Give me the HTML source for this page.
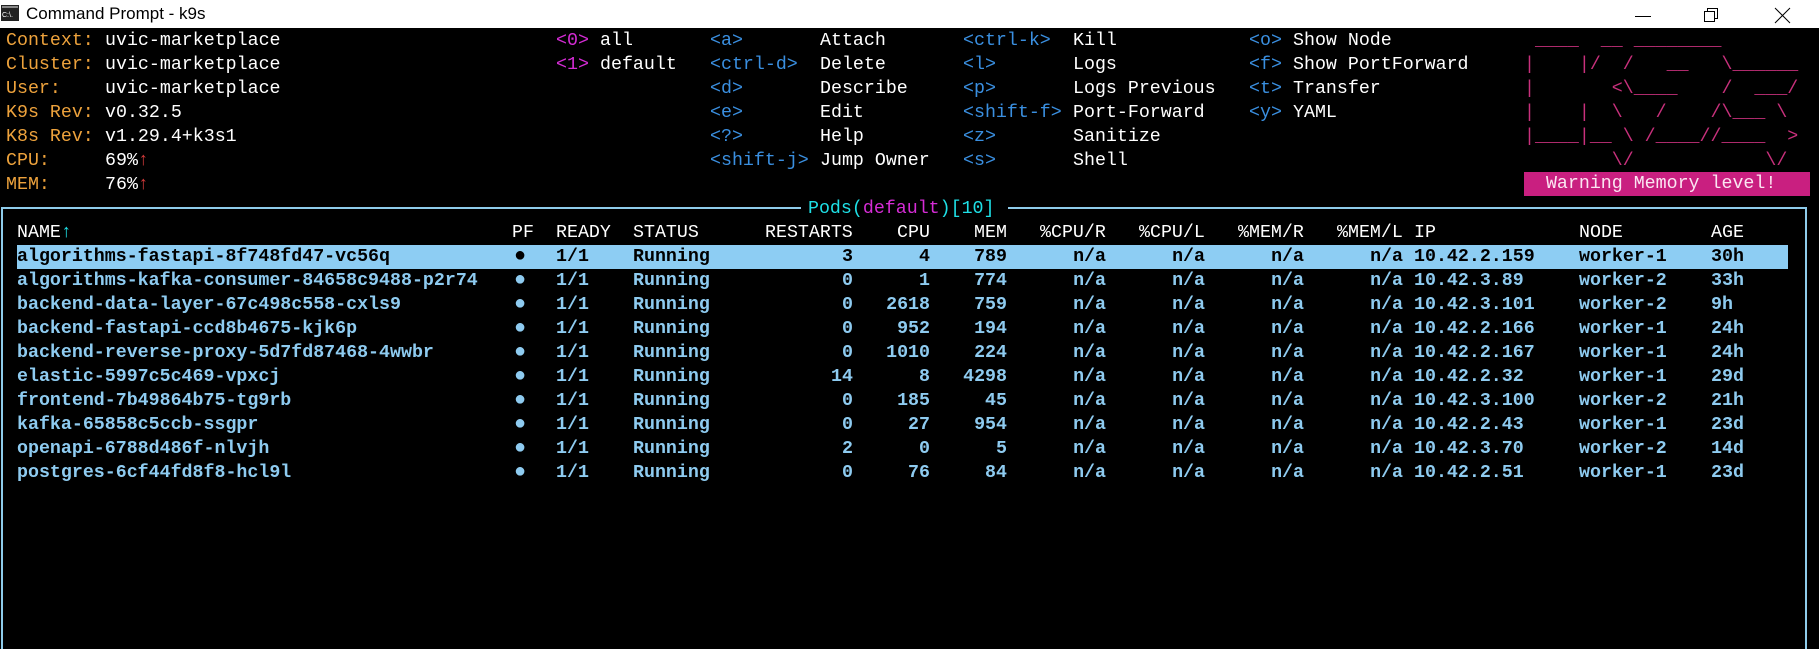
<!DOCTYPE html>
<html><head><meta charset="utf-8"><style>
*{margin:0;padding:0;box-sizing:border-box}
html,body{width:1819px;height:649px;overflow:hidden}
body{background:#000;position:relative;font-family:"Liberation Mono",monospace;font-size:18.3px;line-height:24px}
.tb{position:absolute;left:0;top:0;width:1819px;height:28px;background:#fff}
.tt{position:absolute;left:26px;top:3px;font-family:"Liberation Sans",sans-serif;font-size:17px;line-height:22px;color:#000}
s{position:absolute;text-decoration:none;white-space:pre}
.o{color:#eda23c}.w{color:#fff}.m{color:#d52cd5}.b{color:#3a8fe0}.t{color:#8ecbf0}.a{color:#1ee0e6}.rd{color:#d23a3a}
.box{position:absolute;left:1px;top:207px;width:1806px;height:460px;border:2px solid #8ecbea}
.hl{position:absolute;left:17px;top:245px;width:1771px;height:24px;background:#8dcdf3}
.logo{position:absolute;left:1524px;top:29px;color:#c8307c;white-space:pre;margin:0;font:inherit;line-height:24px}
.warn{position:absolute;left:1524px;top:172px;width:286px;height:24px;background:#c91f80;color:#fbe6f2;white-space:pre}
.row{position:absolute;left:0;width:1819px;height:24px;color:#8ecbf0;font-weight:bold}
.row s{top:0}
.row.sel{color:#000}
.c1{left:17px}.c2{left:514px;font-size:20px}.c3{left:556px}.c4{left:633px}
.c5{left:699px;width:154px;text-align:right}
.c6{left:864px;width:66px;text-align:right}
.c7{left:941px;width:66px;text-align:right}
.c8{left:1040px;width:66px;text-align:right}
.c9{left:1139px;width:66px;text-align:right}
.c10{left:1238px;width:66px;text-align:right}
.c11{left:1337px;width:66px;text-align:right}
.c12{left:1414px}.c13{left:1579px}.c14{left:1711px}
</style></head><body>
<div class="tb">
<svg style="position:absolute;left:1px;top:5px" width="18" height="16" viewBox="0 0 18 16"><rect x="0" y="0" width="18" height="16" fill="#222"/><rect x="1" y="1" width="16" height="2" fill="#888"/><text x="1" y="12" font-family="Liberation Sans" font-size="7" fill="#fff">C:\.</text></svg>
<div class="tt">Command Prompt - k9s</div>
<svg style="position:absolute;left:1630px;top:6px" width="170" height="18" viewBox="0 0 170 18"><line x1="5" y1="10.5" x2="21" y2="10.5" stroke="#000" stroke-width="1"/><rect x="74.5" y="5.5" width="10" height="10" fill="none" stroke="#000"/><path d="M77.5 5.5V2.5H87.5V12.5H84.5" fill="none" stroke="#000"/><path d="M145 2L160 17M160 2L145 17" stroke="#000" stroke-width="1"/></svg>
</div>

<s class="o" style="left:6px;top:29px">Context:</s><s class="w" style="left:105px;top:29px">uvic-marketplace</s>
<s class="o" style="left:6px;top:53px">Cluster:</s><s class="w" style="left:105px;top:53px">uvic-marketplace</s>
<s class="o" style="left:6px;top:77px">User:</s><s class="w" style="left:105px;top:77px">uvic-marketplace</s>
<s class="o" style="left:6px;top:101px">K9s Rev:</s><s class="w" style="left:105px;top:101px">v0.32.5</s>
<s class="o" style="left:6px;top:125px">K8s Rev:</s><s class="w" style="left:105px;top:125px">v1.29.4+k3s1</s>
<s class="o" style="left:6px;top:149px">CPU:</s><s class="w" style="left:105px;top:149px">69%<span class="rd">↑</span></s>
<s class="o" style="left:6px;top:173px">MEM:</s><s class="w" style="left:105px;top:173px">76%<span class="rd">↑</span></s>

<s class="m" style="left:556px;top:29px">&lt;0&gt;</s><s class="w" style="left:600px;top:29px">all</s>
<s class="m" style="left:556px;top:53px">&lt;1&gt;</s><s class="w" style="left:600px;top:53px">default</s>

<s class="b" style="left:710px;top:29px">&lt;a&gt;</s><s class="w" style="left:820px;top:29px">Attach</s>
<s class="b" style="left:710px;top:53px">&lt;ctrl-d&gt;</s><s class="w" style="left:820px;top:53px">Delete</s>
<s class="b" style="left:710px;top:77px">&lt;d&gt;</s><s class="w" style="left:820px;top:77px">Describe</s>
<s class="b" style="left:710px;top:101px">&lt;e&gt;</s><s class="w" style="left:820px;top:101px">Edit</s>
<s class="b" style="left:710px;top:125px">&lt;?&gt;</s><s class="w" style="left:820px;top:125px">Help</s>
<s class="b" style="left:710px;top:149px">&lt;shift-j&gt;</s><s class="w" style="left:820px;top:149px">Jump Owner</s>

<s class="b" style="left:963px;top:29px">&lt;ctrl-k&gt;</s><s class="w" style="left:1073px;top:29px">Kill</s>
<s class="b" style="left:963px;top:53px">&lt;l&gt;</s><s class="w" style="left:1073px;top:53px">Logs</s>
<s class="b" style="left:963px;top:77px">&lt;p&gt;</s><s class="w" style="left:1073px;top:77px">Logs Previous</s>
<s class="b" style="left:963px;top:101px">&lt;shift-f&gt;</s><s class="w" style="left:1073px;top:101px">Port-Forward</s>
<s class="b" style="left:963px;top:125px">&lt;z&gt;</s><s class="w" style="left:1073px;top:125px">Sanitize</s>
<s class="b" style="left:963px;top:149px">&lt;s&gt;</s><s class="w" style="left:1073px;top:149px">Shell</s>

<s class="b" style="left:1249px;top:29px">&lt;o&gt;</s><s class="w" style="left:1293px;top:29px">Show Node</s>
<s class="b" style="left:1249px;top:53px">&lt;f&gt;</s><s class="w" style="left:1293px;top:53px">Show PortForward</s>
<s class="b" style="left:1249px;top:77px">&lt;t&gt;</s><s class="w" style="left:1293px;top:77px">Transfer</s>
<s class="b" style="left:1249px;top:101px">&lt;y&gt;</s><s class="w" style="left:1293px;top:101px">YAML</s>

<pre class="logo"> ____  __ ________
|    |/  /   __   \______
|       &lt;\____    /  ___/
|    |  \   /    /\___ \
|____|__ \ /____//____  &gt;
        \/            \/</pre>
<div class="warn">  Warning Memory level!</div>

<div class="box"></div>
<div style="position:absolute;left:801px;top:200px;width:207px;height:20px;background:#000"></div>
<s style="left:797px;top:197px"> <span class="a">Pods(</span><span class="m">default</span><span class="a">)[10]</span> </s>

<div class="hl"></div>

<s class="w" style="left:17px;top:221px">NAME<span class="a">↑</span></s>
<s class="w" style="left:512px;top:221px">PF</s>
<s class="w" style="left:556px;top:221px">READY</s>
<s class="w" style="left:633px;top:221px">STATUS</s>
<s class="w" style="left:765px;top:221px">RESTARTS</s>
<s class="w" style="left:897px;top:221px">CPU</s>
<s class="w" style="left:974px;top:221px">MEM</s>
<s class="w" style="left:1040px;top:221px">%CPU/R</s>
<s class="w" style="left:1139px;top:221px">%CPU/L</s>
<s class="w" style="left:1238px;top:221px">%MEM/R</s>
<s class="w" style="left:1337px;top:221px">%MEM/L</s>
<s class="w" style="left:1414px;top:221px">IP</s>
<s class="w" style="left:1579px;top:221px">NODE</s>
<s class="w" style="left:1711px;top:221px">AGE</s>

<div class="row sel" style="top:245px"><s class="c1">algorithms-fastapi-8f748fd47-vc56q</s><s class="c2">●</s><s class="c3">1/1</s><s class="c4">Running</s><s class="c5">3</s><s class="c6">4</s><s class="c7">789</s><s class="c8">n/a</s><s class="c9">n/a</s><s class="c10">n/a</s><s class="c11">n/a</s><s class="c12">10.42.2.159</s><s class="c13">worker-1</s><s class="c14">30h</s></div>
<div class="row" style="top:269px"><s class="c1">algorithms-kafka-consumer-84658c9488-p2r74</s><s class="c2">●</s><s class="c3">1/1</s><s class="c4">Running</s><s class="c5">0</s><s class="c6">1</s><s class="c7">774</s><s class="c8">n/a</s><s class="c9">n/a</s><s class="c10">n/a</s><s class="c11">n/a</s><s class="c12">10.42.3.89</s><s class="c13">worker-2</s><s class="c14">33h</s></div>
<div class="row" style="top:293px"><s class="c1">backend-data-layer-67c498c558-cxls9</s><s class="c2">●</s><s class="c3">1/1</s><s class="c4">Running</s><s class="c5">0</s><s class="c6">2618</s><s class="c7">759</s><s class="c8">n/a</s><s class="c9">n/a</s><s class="c10">n/a</s><s class="c11">n/a</s><s class="c12">10.42.3.101</s><s class="c13">worker-2</s><s class="c14">9h</s></div>
<div class="row" style="top:317px"><s class="c1">backend-fastapi-ccd8b4675-kjk6p</s><s class="c2">●</s><s class="c3">1/1</s><s class="c4">Running</s><s class="c5">0</s><s class="c6">952</s><s class="c7">194</s><s class="c8">n/a</s><s class="c9">n/a</s><s class="c10">n/a</s><s class="c11">n/a</s><s class="c12">10.42.2.166</s><s class="c13">worker-1</s><s class="c14">24h</s></div>
<div class="row" style="top:341px"><s class="c1">backend-reverse-proxy-5d7fd87468-4wwbr</s><s class="c2">●</s><s class="c3">1/1</s><s class="c4">Running</s><s class="c5">0</s><s class="c6">1010</s><s class="c7">224</s><s class="c8">n/a</s><s class="c9">n/a</s><s class="c10">n/a</s><s class="c11">n/a</s><s class="c12">10.42.2.167</s><s class="c13">worker-1</s><s class="c14">24h</s></div>
<div class="row" style="top:365px"><s class="c1">elastic-5997c5c469-vpxcj</s><s class="c2">●</s><s class="c3">1/1</s><s class="c4">Running</s><s class="c5">14</s><s class="c6">8</s><s class="c7">4298</s><s class="c8">n/a</s><s class="c9">n/a</s><s class="c10">n/a</s><s class="c11">n/a</s><s class="c12">10.42.2.32</s><s class="c13">worker-1</s><s class="c14">29d</s></div>
<div class="row" style="top:389px"><s class="c1">frontend-7b49864b75-tg9rb</s><s class="c2">●</s><s class="c3">1/1</s><s class="c4">Running</s><s class="c5">0</s><s class="c6">185</s><s class="c7">45</s><s class="c8">n/a</s><s class="c9">n/a</s><s class="c10">n/a</s><s class="c11">n/a</s><s class="c12">10.42.3.100</s><s class="c13">worker-2</s><s class="c14">21h</s></div>
<div class="row" style="top:413px"><s class="c1">kafka-65858c5ccb-ssgpr</s><s class="c2">●</s><s class="c3">1/1</s><s class="c4">Running</s><s class="c5">0</s><s class="c6">27</s><s class="c7">954</s><s class="c8">n/a</s><s class="c9">n/a</s><s class="c10">n/a</s><s class="c11">n/a</s><s class="c12">10.42.2.43</s><s class="c13">worker-1</s><s class="c14">23d</s></div>
<div class="row" style="top:437px"><s class="c1">openapi-6788d486f-nlvjh</s><s class="c2">●</s><s class="c3">1/1</s><s class="c4">Running</s><s class="c5">2</s><s class="c6">0</s><s class="c7">5</s><s class="c8">n/a</s><s class="c9">n/a</s><s class="c10">n/a</s><s class="c11">n/a</s><s class="c12">10.42.3.70</s><s class="c13">worker-2</s><s class="c14">14d</s></div>
<div class="row" style="top:461px"><s class="c1">postgres-6cf44fd8f8-hcl9l</s><s class="c2">●</s><s class="c3">1/1</s><s class="c4">Running</s><s class="c5">0</s><s class="c6">76</s><s class="c7">84</s><s class="c8">n/a</s><s class="c9">n/a</s><s class="c10">n/a</s><s class="c11">n/a</s><s class="c12">10.42.2.51</s><s class="c13">worker-1</s><s class="c14">23d</s></div>
</body></html>
